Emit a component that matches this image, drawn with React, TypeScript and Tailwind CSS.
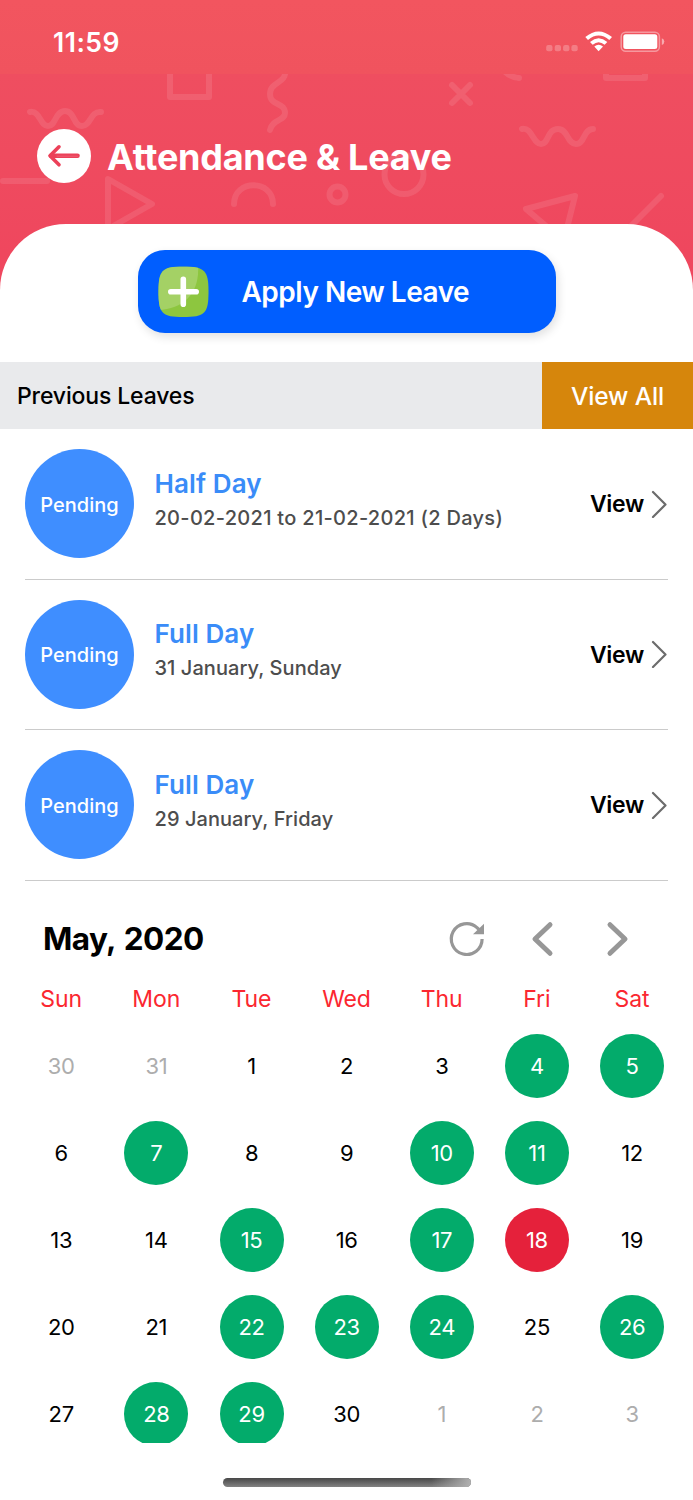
import type { ReactNode } from "react";

const leaves = [
  { type: "Half Day", date: "20-02-2021 to 21-02-2021 (2 Days)", dateTrack: "tracking-[0.3px]" },
  { type: "Full Day", date: "31 January, Sunday", dateTrack: "tracking-[0.06px]" },
  { type: "Full Day", date: "29 January, Friday", dateTrack: "tracking-[0.06px]" },
];

const weekdays = ["Sun", "Mon", "Tue", "Wed", "Thu", "Fri", "Sat"];

const weeks = [
  [30, 31, 1, 2, 3, 4, 5],
  [6, 7, 8, 9, 10, 11, 12],
  [13, 14, 15, 16, 17, 18, 19],
  [20, 21, 22, 23, 24, 25, 26],
  [27, 28, 29, 30, 1, 2, 3],
];

const present = [4, 5, 7, 10, 11, 15, 17, 22, 23, 24, 26, 28, 29];

function dayClass(day: number, week: number) {
  const outside = (week === 0 && day > 20) || (week === 4 && day < 10);
  if (outside) return "text-[#adadad]";
  if (day === 18) return "bg-[#e5213b] text-white";
  if (present.includes(day)) return "bg-[#03ab6b] text-white";
  return "text-black";
}

function Pattern() {
  return (
    <svg
      className="absolute left-0 top-[74px]"
      width="693"
      height="226"
      viewBox="0 74 693 226"
      fill="none"
      stroke="#fff"
      strokeOpacity="0.1"
      strokeWidth="6"
      strokeLinecap="round"
      strokeLinejoin="round"
    >
      <path d="M170 70V97H209V70" />
      <path d="M285 70C287 84 270 81 270 94C270 106 285 102 285 113C285 121 272 119 270 130" />
      <path d="M30 112C40 110 40 126 48 126C56 126 55 111 65 111C75 111 73 126 82 126C91 126 90 111 101 112" />
      <path d="M3 181H47" />
      <path d="M108 260V179L152 204L108 229" />
      <path d="M234 204C234 179 273 179 273 204" />
      <circle cx="337.500" cy="194.500" r="8" />
      <circle cx="404" cy="174.500" r="19.500" />
      <path d="M452 85L470 103M470 85L452 103" />
      <path d="M502 68Q508 77 519 78" />
      <path d="M606 70V78H645V70" />
      <path d="M522 129C532 127 533 144 541 144C549 144 547 129 558 129C568 129 567 144 576 144C585 144 583 129 593 129" />
      <path d="M564 240L575 196L526 209L552 231" />
      <path d="M661 196L626 231" />
    </svg>
  );
}

function StatusIcons() {
  return (
    <svg width="120" height="24" viewBox="545 30 120 24" fill="#fff">
      <g opacity="0.24">
        <rect x="546.200" y="45" width="6.300" height="6.300" rx="2" />
        <rect x="554.700" y="45" width="6.300" height="6.300" rx="2" />
        <rect x="563.100" y="45" width="6.300" height="6.300" rx="2" />
        <rect x="571.400" y="45" width="6.300" height="6.300" rx="2" />
      </g>
      <path d="M585.300 37Q598.600 25.800 612 37L609.300 39.900Q598.600 31 588 39.900Z" />
      <path d="M590 42Q598.600 34.700 607.300 42L604.600 44.800Q598.600 39.800 592.700 44.800Z" />
      <path d="M594.300 46.500Q598.600 43 603 46.500L598.600 51.200Z" />
      <rect x="621.200" y="32.200" width="38.200" height="19" rx="4.500" fill="none" stroke="#fff" strokeOpacity="0.4" strokeWidth="1.500" />
      <rect x="623.300" y="34.300" width="34" height="14.800" rx="2.500" />
      <path d="M661.800 38.200Q664.300 39 664.300 41.600Q664.300 44.200 661.800 45Z" opacity="0.5" />
    </svg>
  );
}

function BackButton() {
  return (
    <button className="flex h-[54px] w-[54px] items-center justify-center rounded-full bg-white" aria-label="Back">
      <svg width="54" height="54" viewBox="37 129 54 54" fill="none" stroke="#ec4159" strokeLinecap="round" strokeLinejoin="round">
        <path d="M59 146.800L50 155.800L59 164.800" strokeWidth="3.600" />
        <path d="M51 155.800H77.500" strokeWidth="4.600" />
        <path d="M57 156.200H77.500" strokeWidth="0.800" stroke="#f0667a" />
      </svg>
    </button>
  );
}

function PlusIcon() {
  return (
    <svg width="52" height="52" viewBox="156 265.500 52 52">
      <clipPath id="tile">
        <path d="M182 266C204 266 207.500 270 207.500 291.300C207.500 313 204 316.600 182 316.600C161 316.600 157.500 313 157.500 291.300C157.500 270 161 266 182 266Z" />
      </clipPath>
      <g clipPath="url(#tile)">
        <rect x="156" y="265" width="52" height="52" fill="#8dc63f" />
        <path d="M156 265H197C199 292 183 309 156 309.500Z" fill="#a4d165" />
      </g>
      <path d="M182.300 278.800V303.800M169.800 291.300H195.200" stroke="#fff" strokeWidth="5.600" strokeLinecap="round" />
    </svg>
  );
}

function IconButton({ label, children }: { label: string; children: ReactNode }) {
  return (
    <button className="flex h-10 w-10 items-center justify-center" aria-label={label}>
      {children}
    </button>
  );
}

export default function App() {
  return (
    <main className="flex h-[1500px] w-[693px] flex-col overflow-hidden bg-white font-['Inter','Liberation_Sans',sans-serif] text-black">
      <header className="relative h-[362px] shrink-0 bg-linear-to-b from-[#ef4e60] from-20% to-[#ef475e] to-70%">
        <Pattern />
        <div className="relative flex h-[74px] items-center justify-between bg-linear-to-b from-[#f2555f] to-[#f0535e] pt-[10px] pr-[28px] pl-[53px]">
          <span className="pt-px text-[26.5px] leading-none font-semibold tracking-[0.5px] text-white">11:59</span>
          <StatusIcons />
        </div>
        <div className="relative flex h-[150px] items-center gap-[16px] pt-[13px] pl-[37px]">
          <BackButton />
          <h1 className="pt-[2px] text-[36px] leading-none font-bold tracking-[-0.25px] whitespace-nowrap text-white">Attendance &amp; Leave</h1>
        </div>
        <div className="relative flex h-[138px] justify-center rounded-t-[66px] bg-white pt-[26px]">
          <button className="flex h-[83px] w-[418px] items-center rounded-[27px] bg-[#005eff] pl-[19px] text-white shadow-[2px_4px_10px_rgba(0,0,0,0.12)]">
            <PlusIcon />
            <span className="ml-[33px] text-[28px] leading-none font-semibold tracking-[-0.5px] whitespace-nowrap">Apply New Leave</span>
          </button>
        </div>
      </header>

      <section className="flex h-[67px] shrink-0 items-stretch justify-between bg-[#e9eaec]">
        <h2 className="flex items-center pt-px pl-[17px] text-[23px] font-medium tracking-[-0.15px]">Previous Leaves</h2>
        <button className="flex w-[151px] items-center justify-center bg-[#d6860c] pt-px text-[24.500px] font-medium tracking-[-0.15px] text-white">View All</button>
      </section>

      <ul className="flex h-[452px] shrink-0 flex-col px-[25px]">
        {leaves.map((leave) => (
          <li key={leave.date} className="flex h-[150.500px] items-center border-b border-[#cbcbcb]">
            <div className="flex h-[109px] w-[109px] shrink-0 items-center justify-center rounded-full bg-[#3f8eff] pt-[2px] text-[20px] font-medium text-white">
              Pending
            </div>
            <div className="ml-[20.500px] flex flex-1 flex-col pb-[6.500px]">
              <span className="text-[26px] leading-[34px] font-semibold tracking-[0.1px] text-[#3a8cf8]">{leave.type}</span>
              <span className={`text-[20px] leading-[34px] font-medium text-[#4d4d4d] ${leave.dateTrack}`}>{leave.date}</span>
            </div>
            <button className="flex items-center text-[23px] font-semibold tracking-[-0.3px]">
              <span className="pt-px">View</span>
              <svg className="ml-[7px]" width="17" height="28" viewBox="0 0 17 28" fill="none" stroke="#6c6c6c" strokeWidth="2.200" strokeLinecap="round" strokeLinejoin="round">
                <path d="M2 2L14.500 14.500L2 27" />
              </svg>
            </button>
          </li>
        ))}
      </ul>

      <section className="flex h-[561.500px] shrink-0 flex-col overflow-hidden">
        <div className="mt-[38px] flex h-10 items-center pr-[56px] pl-[43px]">
          <h2 className="flex-1 text-[31.500px] leading-none font-bold tracking-[-0.6px] [word-spacing:2px]">May, 2020</h2>
          <div className="flex gap-[35px]">
            <IconButton label="Refresh">
              <svg width="40" height="40" viewBox="447 919 40 40" fill="none">
                <path d="M482.100 939A15.400 15.400 0 1 1 477 927.600L480 930.500" stroke="#979797" strokeWidth="3.200" />
                <path d="M484 923.800V934.300H473Z" fill="#979797" />
              </svg>
            </IconButton>
            <IconButton label="Previous month">
              <svg width="40" height="40" viewBox="522 919 40 40" fill="none" stroke="#979797" strokeWidth="5" strokeLinecap="round" strokeLinejoin="round">
                <path d="M550 924.700L535 939L550 953.300" />
              </svg>
            </IconButton>
            <IconButton label="Next month">
              <svg width="40" height="40" viewBox="597 919 40 40" fill="none" stroke="#979797" strokeWidth="5" strokeLinecap="round" strokeLinejoin="round">
                <path d="M610 924.700L625 939L610 953.300" />
              </svg>
            </IconButton>
          </div>
        </div>
        <div className="ml-[13.500px] grid h-[63.500px] w-[666px] shrink-0 grid-cols-7 pt-[26px] text-center text-[23px] leading-[28px] tracking-[-0.1px] text-[#fb2730]">
          {weekdays.map((day) => (
            <span key={day}>{day}</span>
          ))}
        </div>
        <div className="ml-[13.700px] grid w-[666px] auto-rows-[87px] grid-cols-7 text-[22px] tracking-[-0.3px]">
          {weeks.flatMap((week, row) =>
            week.map((day) => (
              <div key={`${row}-${day}`} className="flex items-center justify-center">
                <span className={`flex h-[64px] w-[64px] items-center justify-center rounded-full pt-px ${dayClass(day, row)}`}>{day}</span>
              </div>
            )),
          )}
        </div>
      </section>

      <footer className="flex flex-1 justify-center pt-[35px]">
        <div className="h-[9px] w-[248px] overflow-hidden rounded-full bg-linear-to-b from-[#484848] to-[#828282]">
          <div className="h-full bg-linear-to-r from-transparent from-84% to-[#b0b0b0]" />
        </div>
      </footer>
    </main>
  );
}
